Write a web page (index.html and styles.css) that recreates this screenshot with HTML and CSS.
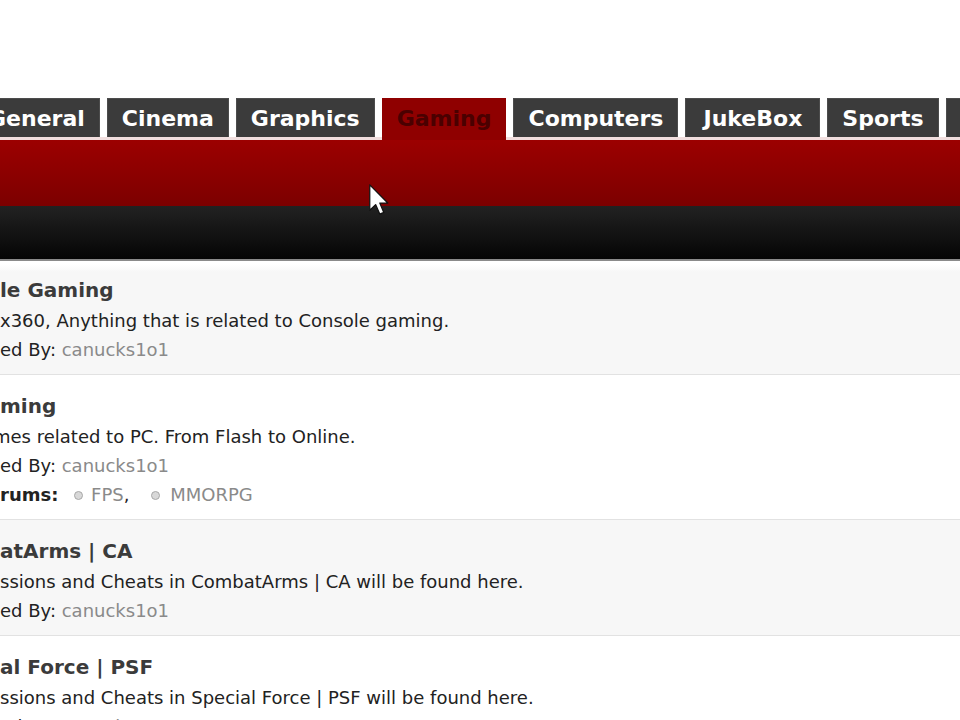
FILE: index.html
```html
<!DOCTYPE html>
<html lang="en">
<head>
    <meta charset="UTF-8">
    <meta name="viewport" content="width=device-width, initial-scale=1.0">
    <title>Gaming - Forums</title>
    <link rel="stylesheet" href="styles.css">
</head>
<body>
    <div class="header">
        <ul class="tabs">
            <li><a href="#">General</a></li>
            <li><a href="#">Cinema</a></li>
            <li><a href="#">Graphics</a></li>
            <li class="active"><a href="#">Gaming</a></li>
            <li><a href="#">Computers</a></li>
            <li class="wide"><a href="#">JukeBox</a></li>
            <li><a href="#">Sports</a></li>
            <li><a href="#">Off Topic</a></li>
        </ul>
        <div class="band-red"></div>
        <div class="band-black"></div>
    </div>

    <!-- forum list -->
    <div class="forums">
        <div class="row alt">
            <div class="title">le Gaming</div>
            <div class="desc">x360, Anything that is related to Console gaming.</div>
            <div class="desc">ed By: <a class="user" href="#">canucks1o1</a></div>
        </div>
        <div class="row">
            <div class="title">ming</div>
            <div class="desc shift">mes related to PC. From Flash to Online.</div>
            <div class="desc">ed By: <a class="user" href="#">canucks1o1</a></div>
            <div class="desc"><b>rums:</b> <span class="dot"></span><a class="user" href="#">FPS</a>, <span class="dot next"></span><a class="user" href="#">MMORPG</a></div>
        </div>
        <div class="row alt">
            <div class="title">atArms | CA</div>
            <div class="desc">ssions and Cheats in CombatArms | CA will be found here.</div>
            <div class="desc">ed By: <a class="user" href="#">canucks1o1</a></div>
        </div>
        <div class="row">
            <div class="title">al Force | PSF</div>
            <div class="desc">ssions and Cheats in Special Force | PSF will be found here.</div>
            <div class="desc">ed By: <a class="user" href="#">canucks1o1</a></div>
        </div>
    </div>

    <!-- mouse pointer -->
    <svg class="pointer" width="20" height="31" viewBox="0 0 13 20">
        <path d="M0.5 0.5 L0.5 17 L4.3 13.3 L7 19.5 L9.6 18.4 L7 12.3 L12.2 12.3 Z" fill="#fff" stroke="#111" stroke-width="0.8" stroke-linejoin="round"/>
    </svg>
</body>
</html>
```

FILE: styles.css
```css
html, body {
    margin: 0;
    padding: 0;
    height: 100%;
    overflow: hidden;
    background: #fff;
}
body {
    font-family: "DejaVu Sans", Verdana, sans-serif;
    color: #222;
    position: relative;
}
a {
    text-decoration: none;
}

/* header tabs + bands */
.header {
    padding-top: 98px;
}
.tabs {
    list-style: none;
    margin: 0 0 0 -27px;
    padding: 0;
    display: flex;
    gap: 7px;
    white-space: nowrap;
    border-bottom: 3px solid #f1dede;
}
.tabs li {
    background: #3b3b3b;
    border: 1px solid #4c4c4c;
    border-bottom: none;
    height: 38px;
    display: flex;
    align-items: center;
    padding: 0 14px;
}
.tabs li.wide {
    padding: 0 17px;
}
.tabs a {
    color: #fff;
    font-weight: bold;
    font-size: 22px;
}
.tabs li.active {
    background: #8f0000;
    border-color: #8f0000;
    margin-bottom: -3px;
    height: 41px;
}
.tabs li.active a {
    color: #4a0000;
    margin-top: -3px;
}
.band-red {
    height: 66px;
    background: linear-gradient(#9c0000, #7c0000);
}
.band-black {
    height: 53px;
    background: linear-gradient(#222222, #050505);
    border-bottom: 2px solid #8a8a8a;
}

/* forum rows */
.forums {
    padding-top: 3px;
}
.row {
    padding: 16px 0 10px;
    border-bottom: 1px solid #e2e2e2;
}
.row:first-child {
    padding-top: 11px;
    background: linear-gradient(#fff 0, #f7f7f7 8px);
}
.row.alt {
    background-color: #f7f7f7;
}
.title {
    font-size: 20px;
    font-weight: bold;
    color: #3b3b3b;
    line-height: 31px;
    white-space: nowrap;
}
.desc {
    font-size: 18px;
    line-height: 29px;
    color: #222;
    white-space: nowrap;
}
.desc.shift {
    margin-left: -7px;
}
.desc b {
    color: #222;
}
.user {
    color: #8a8a8a;
}
.dot {
    display: inline-block;
    width: 7px;
    height: 7px;
    border-radius: 50%;
    background: #d8d8d8;
    border: 1px solid #a8a8a8;
    margin: 0 8px 1px 10px;
}
.dot.next {
    margin-left: 16px;
    margin-right: 10px;
}

.pointer {
    position: absolute;
    left: 369px;
    top: 184px;
}
```
